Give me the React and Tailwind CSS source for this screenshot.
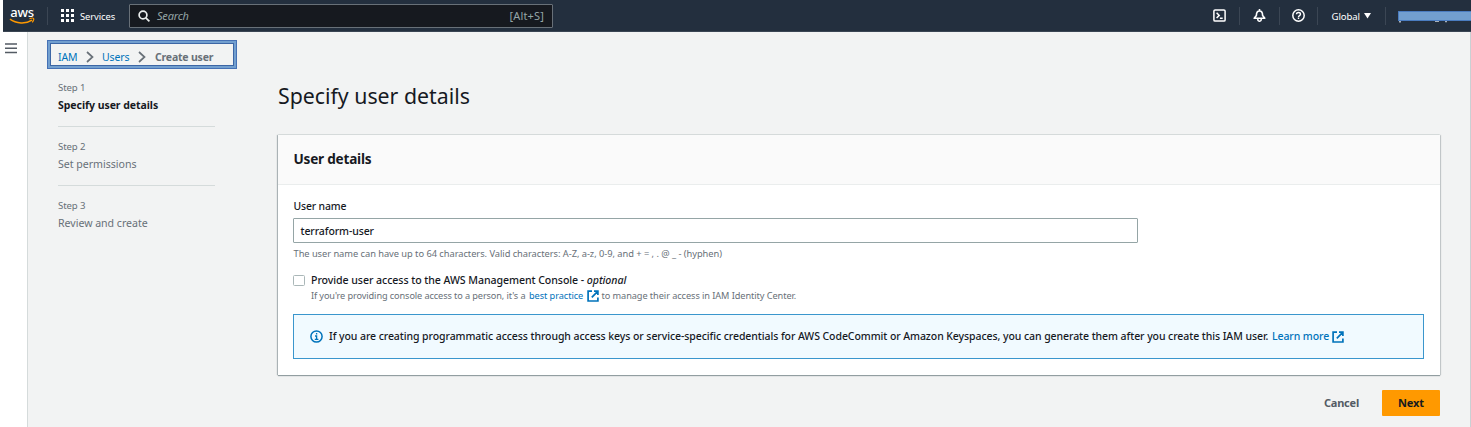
import React from "react";

function ExternalIcon() {
  return (
    <svg className="h-[12px] w-[12px] shrink-0" viewBox="0 0 12 12" fill="none" stroke="#0073bb" strokeWidth="1.7">
      <path d="M5 1.2H1.1v9.8h9.8V7.5M7 1.1h3.9v4M10.7 1.4L4.8 7.3" />
    </svg>
  );
}

function Chevron() {
  return (
    <svg className="h-[12px] w-[8px] shrink-0" viewBox="0 0 8 12" fill="none" stroke="#687078" strokeWidth="1.7">
      <path d="M1 1l5.5 5L1 11" />
    </svg>
  );
}

function AwsLogo() {
  return (
    <div className="flex w-[26px] flex-col items-center">
      <span className="h-[12px] text-[13px] leading-[12px] font-medium tracking-[-0.3px] text-white">aws</span>
      <svg className="-mt-px h-[8px] w-[26px]" viewBox="0 0 26 8" fill="none" stroke="#ff9900">
        <path d="M1 2.2C7 6.8 17 7.2 23 3.2" strokeWidth="1.6" />
        <path d="M20.5 1.6C22.5 1 24.3 1 24.6 1.5S24.3 4 23.3 5.3" strokeWidth="1.2" />
      </svg>
    </div>
  );
}

function Divider() {
  return <div className="h-[18px] w-px shrink-0 bg-[#3b4654]" />;
}

function TopBar() {
  return (
    <header className="ml-[3px] flex h-[32px] shrink-0 items-center border-b border-[#3a4553] bg-[#232f3e] text-white">
      <div className="flex w-[44px] pl-[6px]">
        <AwsLogo />
      </div>
      <Divider />
      <svg className="ml-[13px] h-[13px] w-[13px]" viewBox="0 0 13 13" fill="#fff">
        {[0, 5, 10].map((y) => [0, 5, 10].map((x) => <rect key={x + "-" + y} x={x} y={y} width="3" height="3" />))}
      </svg>
      <span className="ml-[6px] w-[49px] pt-[3px] text-[9.4px] tracking-[-0.08px]">Services</span>
      <div className="flex h-[24px] w-[424px] items-center rounded-[1px] border border-[#687078] bg-[#16191f] pr-[8px] pl-[8px] text-[#95a5a6]">
        <svg className="h-[12px] w-[12px]" viewBox="0 0 12 12" fill="none" stroke="#eaeded" strokeWidth="1.7">
          <circle cx="5" cy="5" r="3.9" />
          <path d="M7.8 7.8l3.6 3.6" />
        </svg>
        <span className="ml-[7px] grow pt-px text-[11px] tracking-[-0.2px] italic">Search</span>
        <span className="pt-px text-[11px] tracking-[0.15px]">[Alt+S]</span>
      </div>
      <div className="ml-auto flex w-[258px] shrink-0 items-center">
        <svg className="h-[13px] w-[13px]" viewBox="0 0 13 13" fill="none" stroke="#fff" strokeWidth="1.5">
          <rect x=".9" y=".9" width="11.2" height="11.2" rx="1.2" />
          <path d="M3.6 3.8l2.6 2.6L3.6 9M6.9 9.2h2.8" />
        </svg>
        <div className="ml-[13px]"><Divider /></div>
        <svg className="ml-[13px] h-[13px] w-[13px]" viewBox="0 0 13 13" fill="none" stroke="#fff" strokeWidth="1.6">
          <path d="M1.2 9.3h10.6L9.6 6.5C9.6 3.4 8.5 2 6.5 2S3.4 3.4 3.4 6.5zM6.5 0v2" strokeLinejoin="round" />
          <path d="M4.7 9.9c0 3.1 3.6 3.1 3.6 0" />
        </svg>
        <div className="ml-[13px]"><Divider /></div>
        <svg className="ml-[12px] h-[13px] w-[13px]" viewBox="0 0 13 13" fill="none" stroke="#fff" strokeWidth="1.5">
          <circle cx="6.5" cy="6.5" r="5.7" />
          <path d="M4.5 5.3c0-2.5 4-2.4 4-.1 0 1.4-2 1.3-2 2.7M6.5 8.6v1.3" strokeWidth="1.4" />
        </svg>
        <div className="ml-[12px]"><Divider /></div>
        <span className="ml-[13.5px] w-[28px] pt-[3px] text-[9.6px] tracking-[-0.1px]">Global</span>
        <svg className="ml-[4.5px] h-[6px] w-[7px]" viewBox="0 0 7 6" fill="#fff">
          <path d="M0 0h7L3.5 5.5z" />
        </svg>
        <div className="ml-auto"><Divider /></div>
        <div className="relative ml-[12px] h-[10px] w-[73px] shrink-0 rounded-l-[1px] border border-r-0 border-[#4a7cc0] bg-[#729fcf]">
          <svg className="absolute top-[9px] left-0 h-[2px] w-[60px]" viewBox="0 0 60 2" fill="#a9b1ba">
            <path d="M0 0h2v1.4H0zM36 0h4v1h-4zM46 0h2v1.2h-2z" />
          </svg>
        </div>
      </div>
    </header>
  );
}

const steps = [
  { n: "Step 1", label: "Specify user details", active: true },
  { n: "Step 2", label: "Set permissions" },
  { n: "Step 3", label: "Review and create" },
];

function Sidebar() {
  return (
    <aside className="w-[251px] shrink-0 pt-[8px]">
      <nav className="ml-[20px] flex h-[29px] w-[190px] items-center pt-[4px] pl-[11px] text-[10.5px] leading-[16px] shadow-[inset_0_0_0_1px_#4571b5,inset_0_0_0_3px_#729fcf,inset_0_0_0_4px_#3c66a5]">
        <span className="w-[28px] pt-px tracking-[-0.1px] text-[#0073bb]">IAM</span>
        <Chevron />
        <span className="ml-[8px] w-[36px] pt-px tracking-[-0.1px] text-[#0073bb]">Users</span>
        <Chevron />
        <span className="ml-[9px] pt-px font-bold tracking-[-0.2px] whitespace-nowrap text-[#687078]">Create user</span>
      </nav>
      <ol className="ml-[31px] w-[157px] pt-[11px]">
        {steps.map((s, i) => (
          <li key={s.n} className={i < 2 ? "mb-[12px] h-[47px] border-b border-[#d5dbdb]" : ""}>
            <div className="h-[16px] text-[9.6px] leading-[16px] tracking-[-0.1px] text-[#687078]">{s.n}</div>
            <div className={s.active ? "text-[10.5px] leading-[19px] font-bold tracking-[-0.05px] text-[#16191f]" : "text-[10.6px] leading-[19px] tracking-[-0.02px] text-[#687078]"}>{s.label}</div>
          </li>
        ))}
      </ol>
    </aside>
  );
}

function DetailsCard() {
  return (
    <section className="h-[240px] bg-white shadow-[0_1px_1px_rgba(0,28,36,0.35),1px_0_1px_rgba(0,28,36,0.15),-1px_0_1px_rgba(0,28,36,0.25),0_-1px_0_#e5eaea]">
      <div className="flex h-[50px] items-center border-b border-[#eaeded] bg-[#fafafa] px-[15.5px] text-[13.6px] font-bold tracking-[-0.22px] text-[#16191f]">
        User details
      </div>
      <div className="px-[15px] pt-[13px]">
        <div className="h-[20px] pl-[0.5px] text-[10.4px] leading-[16px] font-medium tracking-[-0.14px] text-[#16191f]">User name</div>
        <div className="flex h-[25px] w-[845px] items-center rounded-[1px] border border-[#95a5a6] bg-white px-[6.5px] pt-[2px] text-[10.5px] font-medium tracking-[-0.1px] text-[#16191f]">
          terraform-user
        </div>
        <div className="h-[29px] pl-[0.5px] text-[9.3px] leading-[22px] tracking-[-0.04px] text-[#687078]">
          The user name can have up to 64 characters. Valid characters: A-Z, a-z, 0-9, and + = , . @ _ - (hyphen)
        </div>
        <div className="flex">
          <div className="mt-[3px] h-[11px] w-[12px] rounded-[1.5px] border border-[#aab7b8] bg-white" />
          <div className="ml-[6px]">
            <div className="h-[16px] text-[10.6px] leading-[17px] font-medium tracking-[-0.07px] whitespace-nowrap text-[#16191f]">
              Provide user access to the AWS Management Console - <i>optional</i>
            </div>
            <div className="flex h-[15px] items-center text-[9.2px] leading-[15px] tracking-[-0.07px] whitespace-nowrap text-[#687078]">
              <span className="w-[218px] tracking-[-0.11px]">If you're providing console access to a person, it's a</span>
              <span className="w-[58px] text-[#0073bb]">best practice</span>
              <ExternalIcon />
              <span className="ml-[2.5px]">to manage their access in IAM Identity Center.</span>
            </div>
          </div>
        </div>
        <div className="mt-[11px] flex h-[45px] w-[1131px] items-center border border-[#3a96cd] bg-[#f1faff] pl-[16px] text-[10.5px] tracking-[-0.09px] whitespace-nowrap text-[#16191f]">
          <svg className="h-[13px] w-[13px]" viewBox="0 0 13 13" fill="none" stroke="#0073bb" strokeWidth="1.5">
            <circle cx="6.5" cy="6.5" r="5.6" />
            <path d="M6.6 2.9v1.5M5 6h1.6v3.4M4.8 9.4h3.6" strokeWidth="1.3" />
          </svg>
          <span className="ml-[6px] w-[943px] pt-px font-medium tracking-[-0.073px]">
            If you are creating programmatic access through access keys or service-specific credentials for AWS CodeCommit or Amazon Keyspaces, you can generate them after you create this IAM user.
          </span>
          <span className="w-[60px] pt-px font-medium text-[#0073bb]">Learn more</span>
          <ExternalIcon />
        </div>
      </div>
    </section>
  );
}

export default function App() {
  return (
    <div className="flex h-[427px] w-[1471px] flex-col overflow-hidden bg-white font-['Noto_Sans',sans-serif]">
      <TopBar />
      <div className="flex grow">
        <div className="w-[27px] shrink-0 pt-[11px] pl-[5px]">
          <svg className="h-[11px] w-[12px]" viewBox="0 0 12 11" fill="none" stroke="#545b64" strokeWidth="1.5">
            <path d="M0 1h12M0 5.25h12M0 9.5h12" />
          </svg>
        </div>
        <div className="flex grow border-r border-[#c9d0d3] bg-[#f2f3f3] shadow-[inset_1px_0_0_#d5dbdb]">
          <Sidebar />
          <main className="w-[1162px] shrink-0 pt-[48px]">
            <h1 className="h-[55px] text-[21.3px] leading-[31px] text-[#16191f]">Specify user details</h1>
            <DetailsCard />
            <div className="mt-[15px] flex h-[26px] items-center justify-end text-[11px] font-bold">
              <span className="mr-[23px] tracking-[-0.2px] text-[#545b64]">Cancel</span>
              <button className="h-[26px] w-[58px] rounded-[1px] bg-[#ff9900] tracking-[-0.1px] text-[#16191f]">Next</button>
            </div>
          </main>
        </div>
      </div>
    </div>
  );
}
